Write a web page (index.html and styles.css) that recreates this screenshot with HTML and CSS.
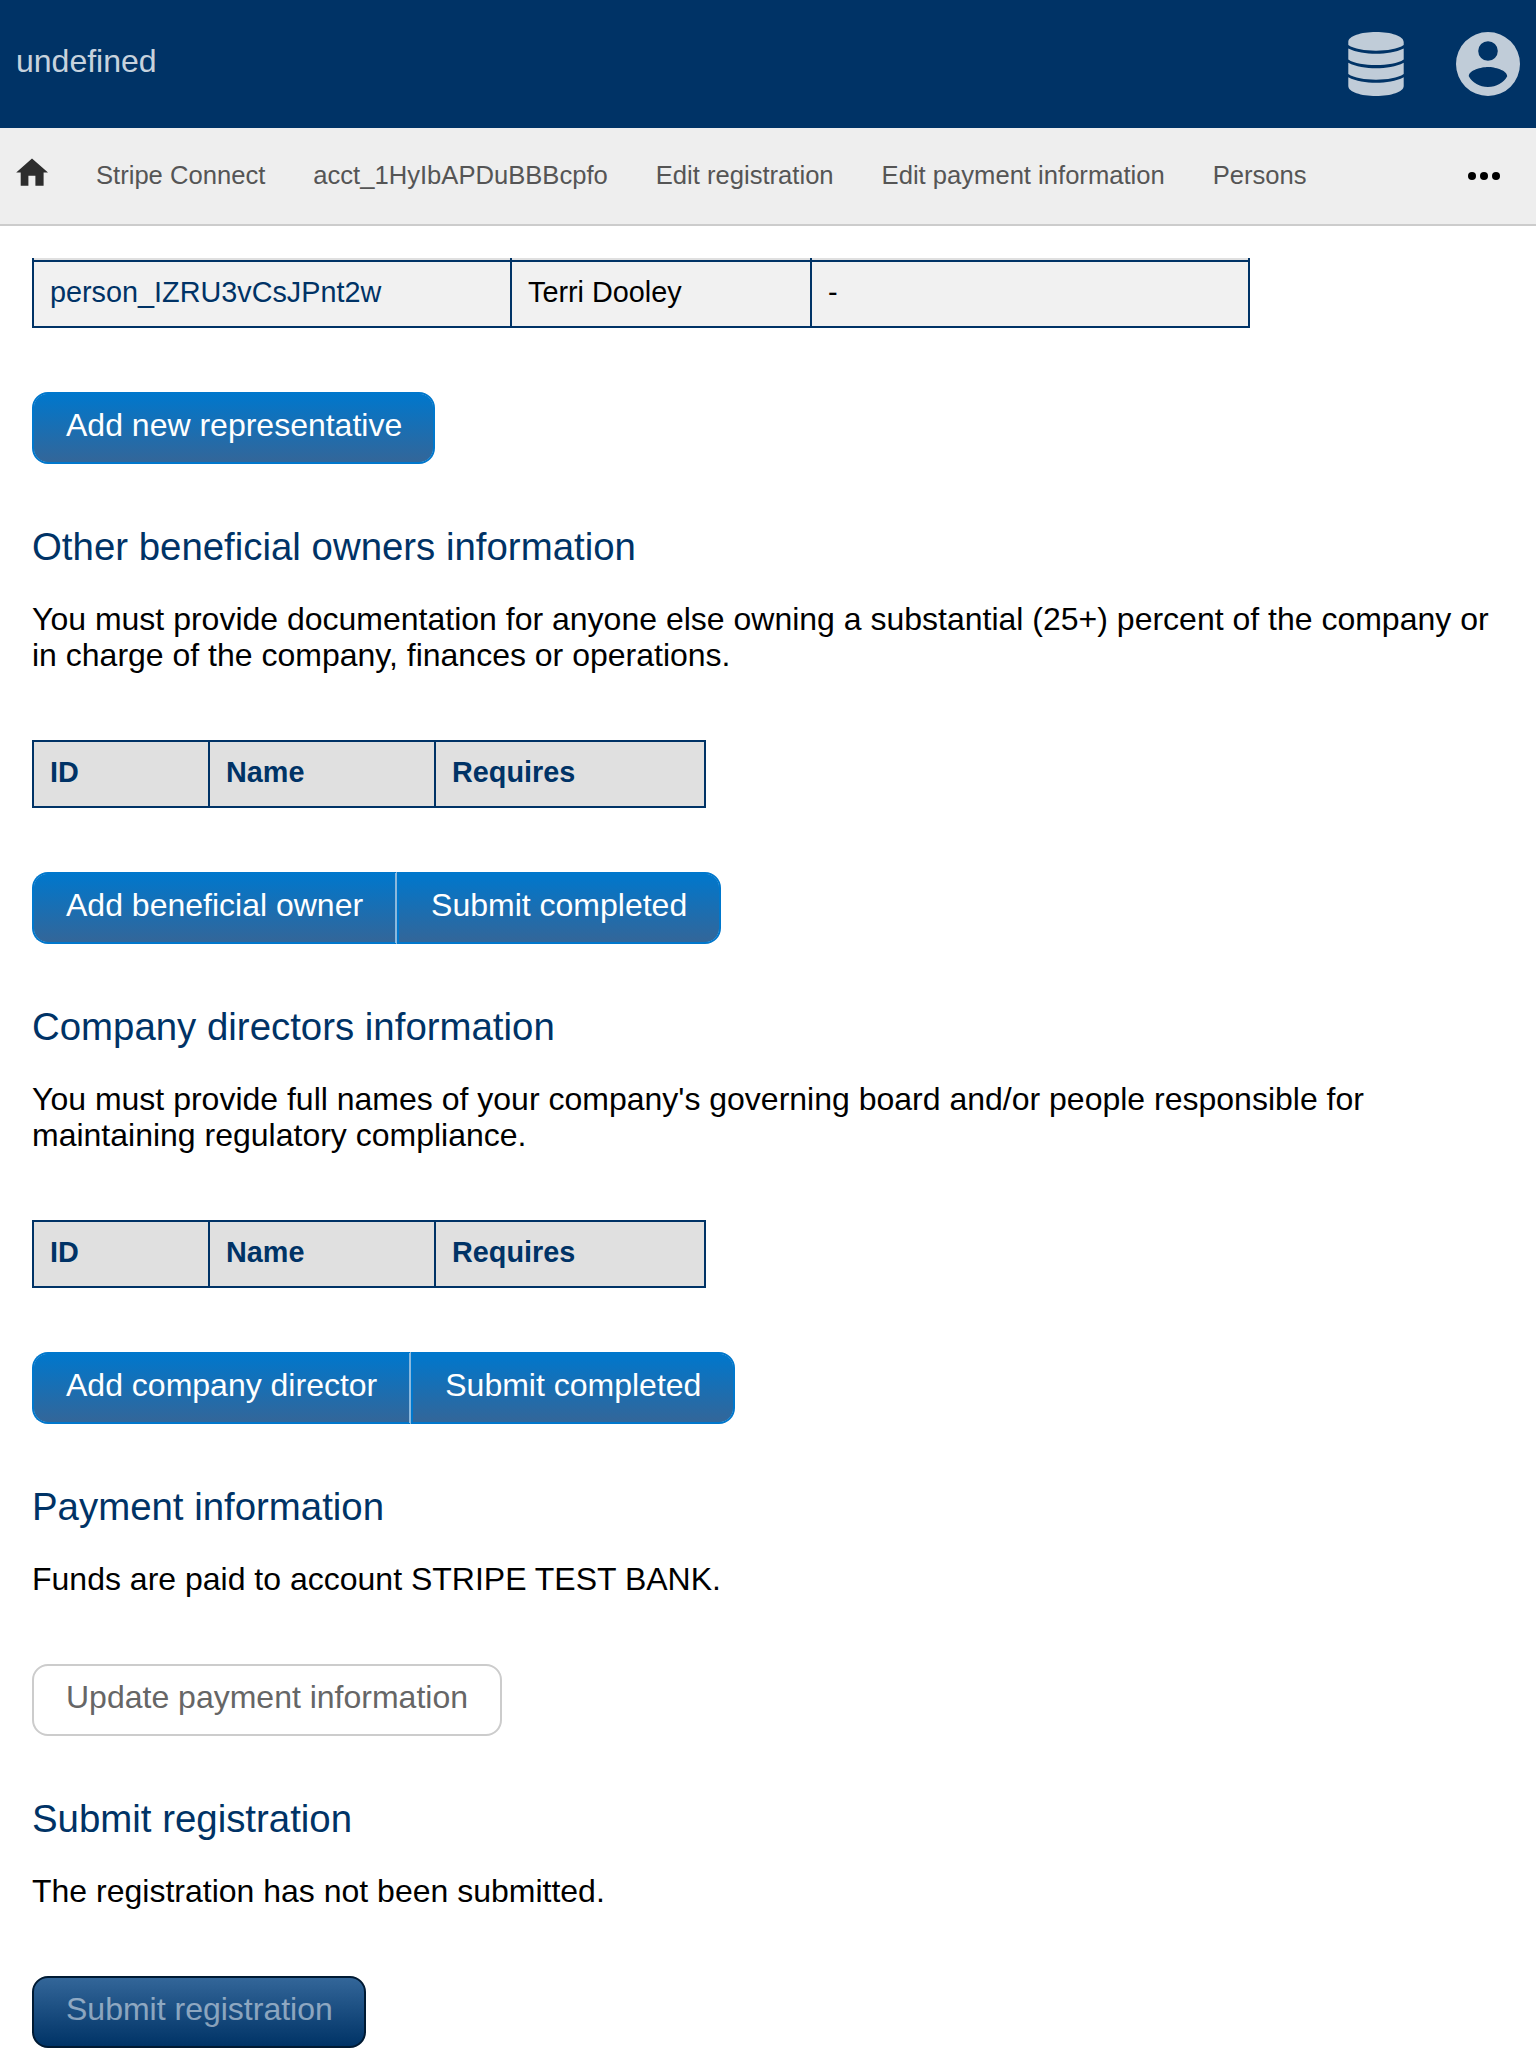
FILE: index.html
```html
<!DOCTYPE html>
<html lang="en">
<head>
<meta charset="utf-8">
<title>Stripe Connect</title>
<link rel="stylesheet" href="styles.css">
</head>
<body>
<header class="header">
  <span class="header-title">undefined</span>
  <div class="header-icons">
    <svg class="icon-database" viewBox="0 0 56 64"><path d="M.3 10C.3 4 13 0 28 0S55.700 4 55.700 10V13C50 17 39 18.700 28 18.700S6 17 .3 13zM.3 16.500C8 20.300 18 21.700 28 21.700S48 20.300 55.700 16.500V27.500C50 31.500 39 33 28 33S6 31.500 .3 27.500zM.3 30.800C8 34.800 18 36.300 28 36.300S48 34.800 55.700 30.800V42C50 46 39 47.700 28 47.700S6 46 .3 42zM.3 45.200C8 49.200 18 50.700 28 50.700S48 49.200 55.700 45.200V54C55.700 60 43 64 28 64S.3 60 .3 54z"/></svg>
    <svg class="icon-account" viewBox="0 0 64 64"><path fill-rule="evenodd" d="M32 0a32 32 0 1 0 0 64a32 32 0 1 0 0-64zM32 9.200a9.800 9.800 0 1 1 0 19.600a9.800 9.800 0 1 1 0-19.600zM32 55C23.500 55 16.500 51 12.800 44.300C13 38 25.500 35 32 35S51 38 51.200 44.300C47.500 51 40.500 55 32 55z"/></svg>
  </div>
</header>
<nav class="nav">
  <svg class="icon-home" viewBox="0 0 32 28"><path d="M16 .5L32 14.500H27.600V27.700H19.400V17.700H12.400V27.700H4.700V14.500H.2z"/></svg>
  <a class="nav-link">Stripe Connect</a>
  <a class="nav-link">acct_1HyIbAPDuBBBcpfo</a>
  <a class="nav-link">Edit registration</a>
  <a class="nav-link">Edit payment information</a>
  <a class="nav-link">Persons</a>
  <svg class="icon-more" viewBox="0 0 32 8"><circle cx="4" cy="4" r="4"/><circle cx="16" cy="4" r="4"/><circle cx="28" cy="4" r="4"/></svg>
</nav>
<main class="content">
  <table class="table table-people">
    <tbody>
      <tr class="clipped-row"><td></td><td></td><td></td></tr>
      <tr><td><a class="person">person_IZRU3vCsJPnt2w</a></td><td>Terri Dooley</td><td>-</td></tr>
    </tbody>
  </table>
  <div class="buttons"><a class="button button-snug">Add new representative</a></div>

  <h2 class="heading">Other beneficial owners information</h2>
  <p class="text">You must provide documentation for anyone else owning a substantial (25+) percent of the company or in charge of the company, finances or operations.</p>
  <table class="table table-empty">
    <thead><tr><th>ID</th><th>Name</th><th>Requires</th></tr></thead>
  </table>
  <div class="buttons"><a class="button">Add beneficial owner</a><a class="button">Submit completed</a></div>

  <h2 class="heading">Company directors information</h2>
  <p class="text">You must provide full names of your company's governing board and/or people responsible for maintaining regulatory compliance.</p>
  <table class="table table-empty">
    <thead><tr><th>ID</th><th>Name</th><th>Requires</th></tr></thead>
  </table>
  <div class="buttons"><a class="button">Add company director</a><a class="button">Submit completed</a></div>

  <h2 class="heading">Payment information</h2>
  <p class="text">Funds are paid to account STRIPE TEST BANK.</p>
  <div class="buttons buttons-after-text"><a class="button button-plain">Update payment information</a></div>

  <h2 class="heading">Submit registration</h2>
  <p class="text">The registration has not been submitted.</p>
  <div class="buttons buttons-after-text"><a class="button button-snug button-disabled">Submit registration</a></div>
</main>
</body>
</html>
```
FILE: styles.css
```css
* { box-sizing: border-box; }
html { overflow: hidden; }
body {
  margin: 0;
  background: #fff;
  color: #000;
  font: 32px/36px "Liberation Sans", Arial, sans-serif;
}
.header {
  display: flex;
  align-items: center;
  justify-content: space-between;
  height: 128px;
  padding: 0 16px;
  background: #036;
}
.header-title { color: rgba(255, 255, 255, .8); padding-bottom: 6px; }
.header-icons { display: flex; gap: 52px; fill: #c0ccd8; }
.icon-database { width: 56px; height: 64px; }
.icon-account { width: 64px; height: 64px; }
.nav {
  display: flex;
  align-items: center;
  gap: 48px;
  height: 98px;
  padding: 0 36px 0 16px;
  background: #eee;
  border-bottom: 2px solid #ccc;
  font-size: 25.6px;
}
.nav-link { color: #555; padding-bottom: 2px; }
.icon-home { width: 32px; height: 28px; fill: #2d2d2d; margin-bottom: 8px; }
.icon-more { width: 32px; height: 8px; margin-left: auto; }
.content { padding: 32px 32px 0; }
.table {
  border-collapse: separate;
  border-spacing: 0;
  table-layout: fixed;
  border-left: 2px solid #036;
  font-size: 28.8px;
  line-height: 32px;
}
.table th, .table td {
  height: 66px;
  padding: 14px 16px 18px;
  border-right: 2px solid #036;
  border-bottom: 2px solid #036;
  text-align: left;
  background: #f1f1f1;
}
.table th { background: #e0e0e0; color: #036; }
.table .clipped-row td { height: 4px; padding: 0; background: #e0e0e0; }
.table-people { width: 1218px; }
.table-people td:nth-child(1) { width: 478px; }
.table-people td:nth-child(2) { width: 300px; }
.table-empty { width: 674px; border-top: 2px solid #036; }
.table-empty th:nth-child(1) { width: 176px; }
.table-empty th:nth-child(2) { width: 226px; }
.person { color: #036; }
.buttons { display: flex; margin: 64px 0 61px; }
.buttons-after-text { margin-top: 0; }
.button {
  height: 72px;
  padding: 13px 32px 19px;
  border: 2px solid #07c;
  background: linear-gradient(#07c, #369) padding-box #07c;
  color: #fff;
}
.button:first-child { border-radius: 16px 0 0 16px; }
.button:last-child { border-radius: 0 16px 16px 0; }
.button:only-child { border-radius: 16px; }
.button:not(:last-child) { border-right-color: #8cb8dc; }
.button-snug { padding-right: 31px; }
.button-plain { background: #fff; border-color: #ccc; color: #666; }
.button-disabled {
  background: linear-gradient(#369, #036);
  border-color: #001a33;
  color: rgba(255, 255, 255, .5);
}
.heading {
  margin: 0 0 32px;
  color: #036;
  font-size: 38.4px;
  font-weight: 400;
  line-height: 44px;
}
.text { margin: 0 0 67px; }
```
